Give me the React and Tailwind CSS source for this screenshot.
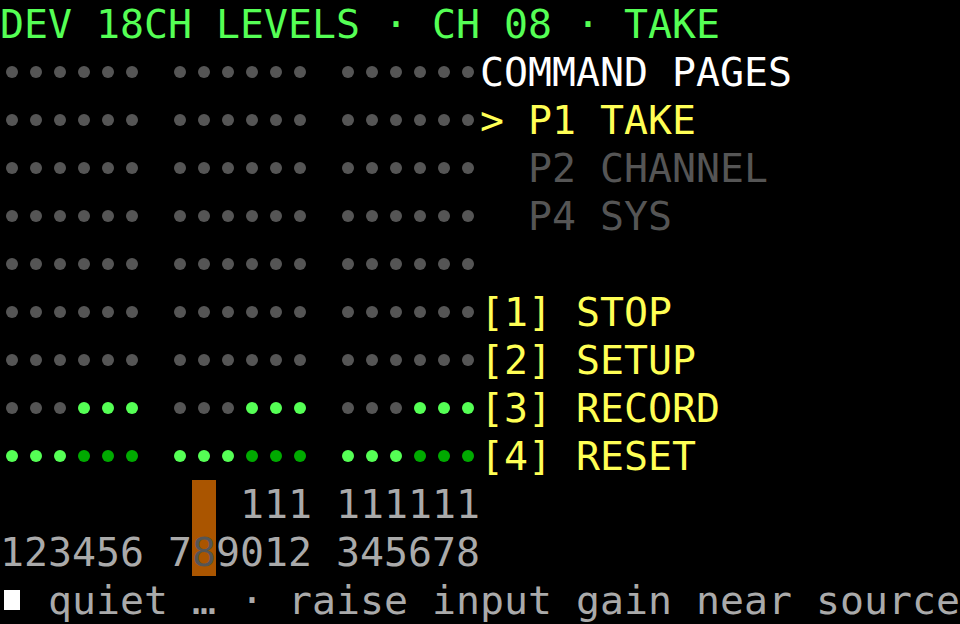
const GREY = 'bg-[#555555]'
const LIT = 'bg-[#55ff55]'
const DIM = 'bg-[#00aa00]'

// dot colour for meter row r (0 = top) and channel position p inside its group of six
function dotColor(r, p) {
  if (r === 7) return p >= 3 ? LIT : GREY
  if (r === 8) return p < 3 ? LIT : DIM
  return GREY
}

const side = [
  { text: 'COMMAND PAGES', cls: 'text-white' },
  { text: '> P1 TAKE', cls: 'text-[#ffff55]' },
  { text: '  P2 CHANNEL', cls: 'text-[#555555]' },
  { text: '  P4 SYS', cls: 'text-[#555555]' },
  { text: '', cls: '' },
  { text: '[1] STOP', cls: 'text-[#ffff55]' },
  { text: '[2] SETUP', cls: 'text-[#ffff55]' },
  { text: '[3] RECORD', cls: 'text-[#ffff55]' },
  { text: '[4] RESET', cls: 'text-[#ffff55]' },
]

function Cell({ children, className = '' }) {
  return (
    <span className={`inline-flex w-[24px] h-[48px] items-center justify-center shrink-0 ${className}`}>
      {children}
    </span>
  )
}

function MeterRow({ r }) {
  const cells = []
  for (let g = 0; g < 3; g++) {
    if (g > 0) cells.push(<Cell key={`gap${g}`} />)
    for (let p = 0; p < 6; p++) {
      cells.push(
        <Cell key={`${g}-${p}`}>
          <span className={`block w-[12px] h-[12px] rounded-full ${dotColor(r, p)}`} />
        </Cell>
      )
    }
  }
  return <div className="flex w-[480px] shrink-0">{cells}</div>
}

export default function App() {
  return (
    <div
      className="w-[960px] h-[624px] overflow-hidden bg-black text-[39.86px] leading-[48px] whitespace-pre"
      style={{ fontFamily: '"DejaVu Sans Mono", "Liberation Mono", monospace' }}
    >
      {/* header */}
      <div className="h-[48px] text-[#55ff55]">DEV 18CH LEVELS · CH 08 · TAKE</div>

      {/* meters + command pages */}
      {side.map((line, r) => (
        <div key={r} className="flex h-[48px]">
          <MeterRow r={r} />
          <span className={line.cls}>{line.text}</span>
        </div>
      ))}

      {/* channel numbers */}
      <div className="flex h-[48px] text-[#aaaaaa]">
        <span>{'        '}</span>
        <span className="w-[24px] h-[48px] bg-[#aa5500]"> </span>
        <span>{' 111 111111'}</span>
      </div>
      <div className="flex h-[48px] text-[#aaaaaa]">
        <span>{'123456 7'}</span>
        <span className="w-[24px] h-[48px] bg-[#aa5500] text-[#555555]">8</span>
        <span>{'9012 345678'}</span>
      </div>

      {/* status line */}
      <div className="flex h-[48px] text-[#aaaaaa]">
        <Cell>
          <span className="block w-[16px] h-[20px] bg-white" />
        </Cell>
        <span>{' quiet … · raise input gain near source'}</span>
      </div>
    </div>
  )
}
